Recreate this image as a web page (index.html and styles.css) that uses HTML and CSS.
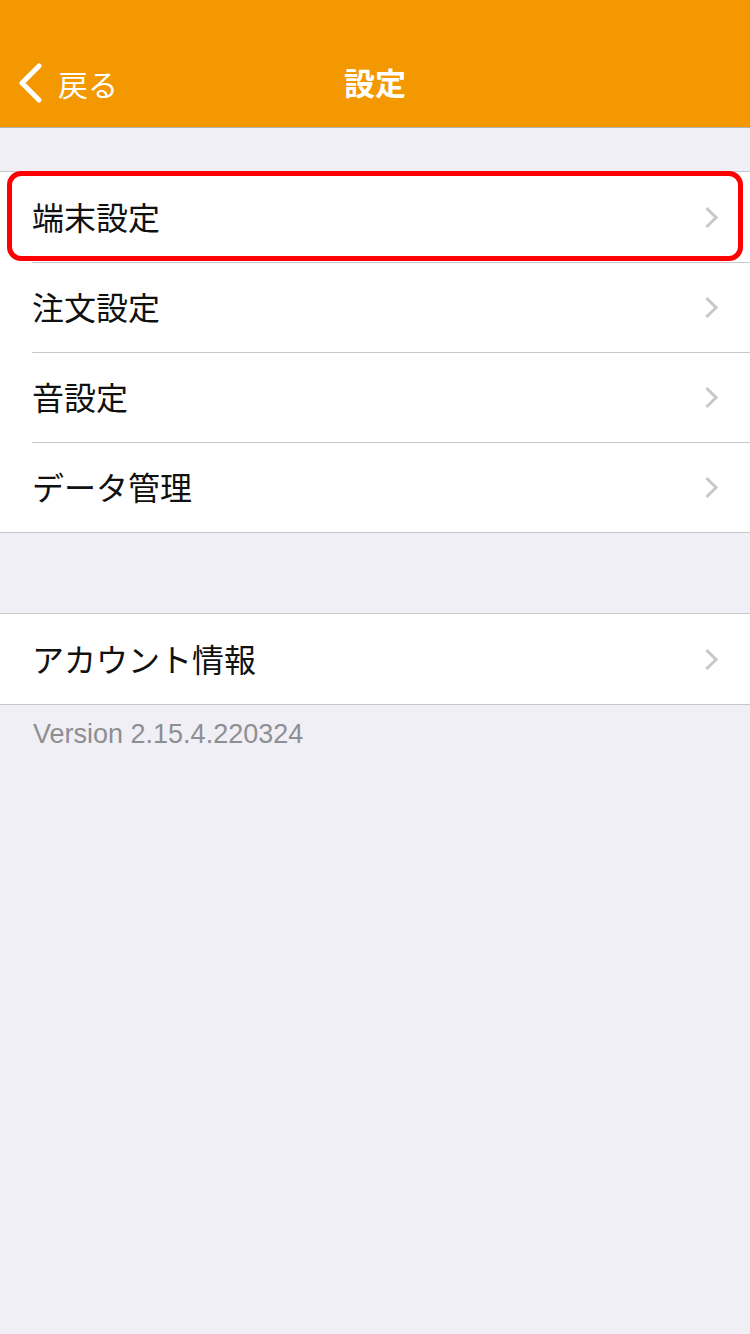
FILE: index.html
```html
<!DOCTYPE html>
<html lang="ja">
<head>
    <meta charset="utf-8">
    <title>設定</title>
    <meta name="viewport" content="width=750">
    <link rel="stylesheet" href="styles.css">
</head>
<body>
    <header class="navbar">
        <a class="back" href="#">
            <svg class="back-icon" width="26" height="40" viewBox="0 0 26 40"><path d="M22 3 L5 20 L22 37" fill="none" stroke="#fff" stroke-width="5" stroke-linecap="round" stroke-linejoin="round"/></svg>
            <span>戻る</span>
        </a>
        <h1 class="title">設定</h1>
    </header>

    <ul class="group first">
        <li class="row highlighted"><span>端末設定</span><i class="chevron"></i></li>
        <li class="row"><span>注文設定</span><i class="chevron"></i></li>
        <li class="row"><span>音設定</span><i class="chevron"></i></li>
        <li class="row"><span>データ管理</span><i class="chevron"></i></li>
    </ul>

    <ul class="group second">
        <li class="row"><span>アカウント情報</span><i class="chevron"></i></li>
    </ul>

    <p class="version">Version 2.15.4.220324</p>
</body>
</html>
```

FILE: styles.css
```css
html {
    background-color: #f0eff5;
}
body {
    margin: 0;
    font-family: "Noto Sans CJK JP", "Noto Sans", sans-serif;
    color: #111;
    min-height: 1334px;
    background-color: #f0eff5;
}
.navbar {
    position: relative;
    height: 128px;
    background-color: #f39800;
    border-bottom: 1px solid #b2b2b2;
    display: flex;
    align-items: center;
    justify-content: center;
    box-sizing: border-box;
    padding-top: 36px;
}
.back {
    position: absolute;
    left: 17px;
    top: 61px;
    display: flex;
    align-items: center;
    gap: 15px;
    color: #fff;
    text-decoration: none;
    font-size: 30px;
}
.back-icon {
    display: block;
}
.title {
    margin: 0;
    color: #fff;
    font-size: 31px;
    font-weight: bold;
}
.group {
    list-style: none;
    margin: 0;
    padding: 0;
    background: #fff;
    border-top: 1px solid #c8c7cc;
    border-bottom: 1px solid #c8c7cc;
}
.group.first {
    margin-top: 43px;
}
.group.second {
    margin-top: 80px;
}
.row {
    position: relative;
    height: 90px;
    display: flex;
    align-items: center;
    justify-content: space-between;
    margin-left: 32px;
    padding-right: 32px;
    padding-bottom: 3px;
    font-size: 32px;
    box-sizing: border-box;
}
.row + .row {
    border-top: 1px solid #c8c7cc;
}
.chevron {
    width: 12px;
    height: 12px;
    border-top: 3px solid #c7c7cc;
    border-right: 3px solid #c7c7cc;
    transform: rotate(45deg);
    margin-right: 3px;
    margin-top: 3px;
}
.highlighted::after {
    content: "";
    position: absolute;
    left: -25px;
    right: 7px;
    top: -1px;
    bottom: 1px;
    border: 5px solid #ff0000;
    border-radius: 14px;
}
.version {
    margin: 14px 0 0 33px;
    font-family: "Liberation Sans", "Noto Sans", sans-serif;
    font-size: 27px;
    color: #8e8e93;
}
```
